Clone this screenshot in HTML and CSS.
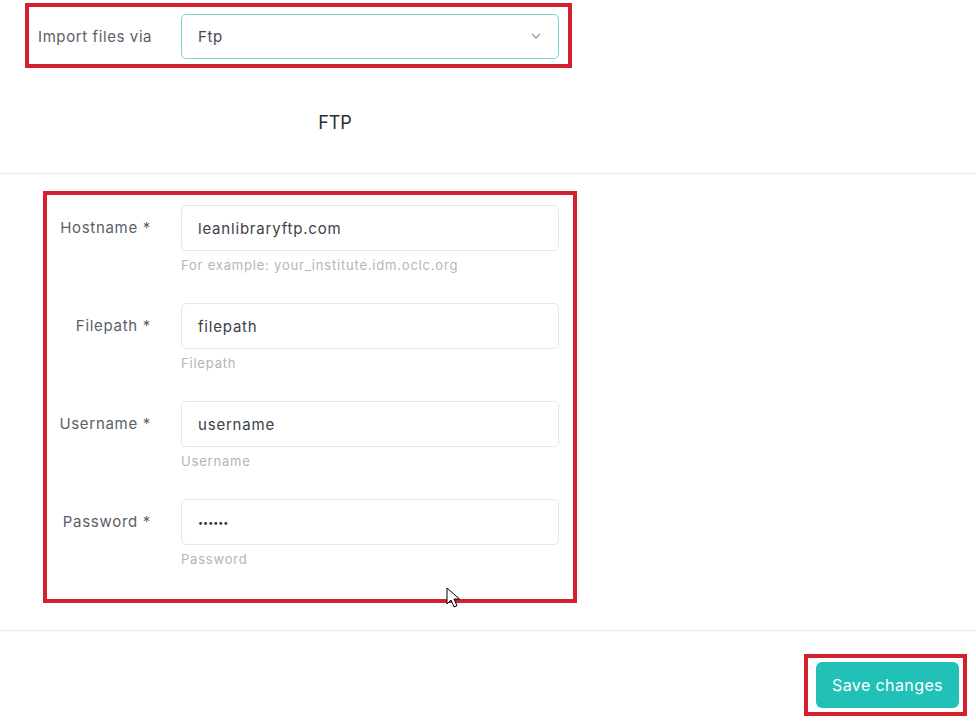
FILE: index.html
```html
<!DOCTYPE html>
<html lang="en">
<head>
<meta charset="utf-8">
<title>Import files</title>
<link rel="stylesheet" href="styles.css">
</head>
<body>
<div class="page">
  <div class="top">
    <div class="mark mark-top">
      <label class="top-label">Import files via</label>
      <div class="select">
        <span>Ftp</span>
        <svg class="chev" width="10" height="6" viewBox="0 0 10 6"><path d="M1 1l4 4 4-4" fill="none" stroke="#8a8f98" stroke-width="1.2"/></svg>
      </div>
    </div>
  </div>
  <div class="heading-area">
    <h2 class="heading">FTP</h2>
  </div>
  <div class="fields-wrap">
    <div class="mark mark-fields">
      <div class="row">
        <label class="lbl">Hostname *</label>
        <div class="field">
          <div class="input">leanlibraryftp.com</div>
          <div class="help">For example: your_institute.idm.oclc.org</div>
        </div>
      </div>
      <div class="row">
        <label class="lbl">Filepath *</label>
        <div class="field">
          <div class="input">filepath</div>
          <div class="help">Filepath</div>
        </div>
      </div>
      <div class="row">
        <label class="lbl">Username *</label>
        <div class="field">
          <div class="input">username</div>
          <div class="help">Username</div>
        </div>
      </div>
      <div class="row">
        <label class="lbl">Password *</label>
        <div class="field">
          <div class="input pw">&bull;&bull;&bull;&bull;&bull;&bull;</div>
          <div class="help">Password</div>
        </div>
      </div>
    </div>
  </div>
  <div class="footer">
    <div class="mark mark-btn">
      <button class="save">Save changes</button>
    </div>
  </div>
  <svg class="cursor" width="14" height="22" viewBox="0 0 14 22"><path d="M1 1v16l4-4 3 7 3-1.3-3-6.7h5.5z" fill="#fff" stroke="#000" stroke-width="1" stroke-linejoin="round"/></svg>
</div>
</body>
</html>
```
FILE: styles.css
```css
* { box-sizing: border-box; }
html, body { margin: 0; padding: 0; background: #fff; }
body {
  font-family: "Inter", "Open Sans", Arial, sans-serif;
  color: #555a62;
  width: 976px;
  height: 724px;
  overflow: hidden;
}
.page { position: relative; height: 724px; }

.mark { border: 4px solid #d3212f; }

.top { padding: 3px 0 0 25px; }
.mark-top {
  width: 547px;
  height: 65px;
  padding: 7px 9px 6px 9px;
  display: flex;
  align-items: center;
}
.top-label {
  width: 143px;
  flex: none;
  font-size: 15px;
  letter-spacing: 0.6px;
  color: #5b6068;
}
.select {
  flex: 1;
  height: 45px;
  border: 1px solid #7bd3d3;
  border-radius: 5px;
  display: flex;
  align-items: center;
  justify-content: space-between;
  padding: 0 17px 0 16px;
  font-size: 15px;
  letter-spacing: 0.6px;
  color: #444a52;
}

.heading-area {
  height: 106px;
  border-bottom: 1px solid #ececec;
  padding: 43px 0 0 0;
}
.heading {
  margin: 0;
  width: 670px;
  text-align: center;
  font-size: 18px;
  font-weight: 400;
  line-height: 24px;
  color: #2a2d31;
}

.fields-wrap { padding: 17px 0 0 43px; }
.mark-fields {
  width: 534px;
  padding: 10px 14px 31px 0;
  display: flex;
  flex-direction: column;
  gap: 29px;
}
.row { display: flex; align-items: flex-start; }
.lbl {
  width: 104px;
  margin-right: 30px;
  flex: none;
  text-align: right;
  font-size: 15px;
  letter-spacing: 0.7px;
  line-height: 46px;
  color: #5b6068;
  white-space: nowrap;
}
.field { flex: 1; }
.input {
  height: 46px;
  border: 1px solid #e6e7ea;
  border-radius: 5px;
  padding: 0 16px;
  display: flex;
  align-items: center;
  font-size: 15px;
  letter-spacing: 0.8px;
  color: #3c4148;
}
.input.pw { font-size: 9px; letter-spacing: 0; color: #2c3036; }
.help {
  margin-top: 5px;
  font-size: 13px;
  line-height: 18px;
  letter-spacing: 0.8px;
  color: #b2b5ba;
}

.footer {
  margin-top: 27px;
  border-top: 1px solid #ececec;
  padding: 23px 9px 0 0;
  display: flex;
  justify-content: flex-end;
}
.mark-btn { padding: 4px 4px 4px 8px; }
.save {
  display: block;
  width: 143px;
  height: 46px;
  border: none;
  border-radius: 6px;
  background: #22c1b8;
  color: #fff;
  font-family: "Inter", "Open Sans", Arial, sans-serif;
  font-size: 16px;
  letter-spacing: 0.4px;
  padding: 0;
}

.cursor { position: absolute; left: 446px; top: 587px; }
```
